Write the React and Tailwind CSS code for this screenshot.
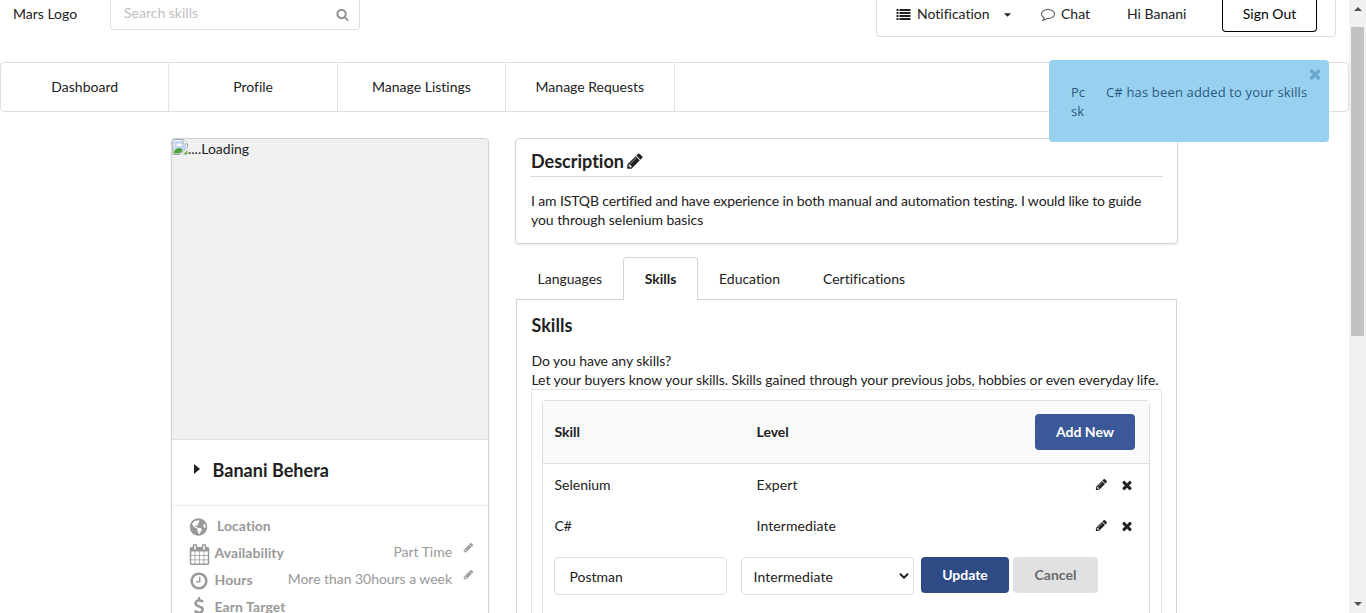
import React from "react";
import { FaGlobeAmericas } from "react-icons/fa";

const paths = {
  search:
    "M1216 832q0-185-131.5-316.5t-316.5-131.5-316.5 131.5-131.5 316.5 131.5 316.5 316.5 131.5 316.5-131.5 131.5-316.5zm512 832q0 52-38 90t-90 38q-54 0-90-38l-343-342q-179 124-399 124-143 0-273.5-55.5t-225-150-150-225-55.5-273.5 55.5-273.5 150-225 225-150 273.5-55.5 273.5 55.5 225 150 150 225 55.5 273.5q0 220-124 399l343 343q37 37 37 90z",
  pencil:
    "M491 1536l91-91-235-235-91 91v107h128v128h107zm523-928q0-22-22-22-10 0-17 7l-542 542q-7 7-7 17 0 22 22 22 10 0 17-7l542-542q7-7 7-17zm-54-192l416 416-832 832h-416v-416zm683 96q0 53-37 90l-166 166-416-416 166-165q36-38 90-38 53 0 91 38l235 234q37 39 37 91z",
  times:
    "M1490 1322q0 40-28 68l-136 136q-28 28-68 28t-68-28l-294-294-294 294q-28 28-68 28t-68-28l-136-136q-28-28-28-68t28-68l294-294-294-294q-28-28-28-68t28-68l136-136q28-28 68-28t68 28l294 294 294-294q28-28 68-28t68 28l136 136q28 28 28 68t-28 68l-294 294 294 294q28 28 28 68z",
  list: "M0 256h256v256H0zM384 256h1408v256H384zM0 640h256v256H0zM384 640h1408v256H384zM0 1024h256v256H0zM384 1024h1408v256H384zM0 1408h256v256H0zM384 1408h1408v256H384z",
  clock:
    "M1024 544v448q0 14-9 23t-23 9h-320q-14 0-23-9t-9-23v-64q0-14 9-23t23-9h224v-352q0-14 9-23t23-9h64q14 0 23 9t9 23zm416 352q0-148-73-273t-198-198-273-73-273 73-198 198-73 273 73 273 198 198 273 73 273-73 198-198 73-273zm224 0q0 209-103 385.5t-279.5 279.5-385.5 103-385.5-103-279.5-279.5-103-385.5 103-385.5 279.5-279.5 385.5-103 385.5 103 279.5 279.5 103 385.5z",
  calendar:
    "M192 1664h288v-288h-288v288zm352 0h320v-288h-320v288zm-352-352h288v-320h-288v320zm352 0h320v-320h-320v320zm-352-384h288v-288h-288v288zm736 736h320v-288h-320v288zm-384-736h320v-288h-320v288zm768 736h288v-288h-288v288zm-384-352h320v-320h-320v320zm-352-864v-288q0-13-9.5-22.5t-22.5-9.5h-64q-13 0-22.5 9.5t-9.5 22.5v288q0 13 9.5 22.5t22.5 9.5h64q13 0 22.5-9.5t9.5-22.5zm736 864h288v-320h-288v320zm-384-384h320v-288h-320v288zm384 0h288v-288h-288v288zm32-480v-288q0-13-9.5-22.5t-22.5-9.5h-64q-13 0-22.5 9.5t-9.5 22.5v288q0 13 9.5 22.5t22.5 9.5h64q13 0 22.5-9.5t9.5-22.5zm384-64v1280q0 52-38 90t-90 38h-1408q-52 0-90-38t-38-90v-1280q0-52 38-90t90-38h128v-96q0-66 47-113t113-47h64q66 0 113 47t47 113v96h384v-96q0-66 47-113t113-47h64q66 0 113 47t47 113v96h128q52 0 90 38t38 90z",
  comment:
    "M896 384q-204 0-381.5 69.5t-282 187.5-104.5 255q0 112 71.5 213.5t201.5 175.5l87 50-27 96q-24 91-70 172 152-63 275-171l43-38 57 6q69 8 130 8 204 0 381.5-69.5t282-187.5 104.5-255-104.5-255-282-187.5-381.5-69.5zm896 512q0 174-120 321.5t-326 233-450 85.5q-70 0-145-8-198 175-460 242-49 14-114 22h-5q-15 0-27-10.5t-16-27.5v-1q-3-4-.5-12t2-10 4.5-9.5l6-9 7-8.5 8-9q7-8 31-34.5t34.5-38 31-39.5 32.5-51 27-59 26-76q-157-89-247.5-220t-90.5-281q0-174 120-321.5t326-233 450-85.5 450 85.5 326 233 120 321.5z",
  dollar:
    "M1362 1185q0 153-99.5 263.5t-258.5 136.5v175q0 14-9 23t-23 9h-135q-13 0-22.5-9.5t-9.5-22.5v-175q-66-9-127.5-31t-101.5-44.5-74-48-46.5-37.5-17.5-18q-17-21-2-41l103-135q7-10 23-12 15-2 24 9l2 2q113 99 243 125 37 8 74 8 81 0 142.5-43t61.5-122q0-28-15-53t-33.5-42-58.5-37.5-66-32-80-32.5q-39-16-61.5-25t-61.5-26.5-62.5-31-56.5-35.5-53.5-42.5-43.5-49-35.5-58-21-66.5-8.5-78q0-138 98-242t255-134v-180q0-13 9.5-22.5t22.5-9.5h135q14 0 23 9t9 23v176q57 6 110.5 23t87 33.5 63.5 37.5 39 29 15 14q17 18 5 38l-81 146q-8 15-23 16-14 3-27-7-3-3-14.5-12t-39-26.5-58.5-32-74.5-26-85.5-11.5q-95 0-155 43t-60 111q0 26 8.5 48t29.5 41.5 39.5 33 56 31 60.5 27 70 27.5q53 20 81 31.5t76 35 75.5 42.5 62 50 53 63.5 31.5 76.5 13 94z",
};

function Icon({ name, className }) {
  return (
    <svg viewBox="0 0 1792 1792" fill="currentColor" className={`shrink-0 ${className}`} aria-hidden="true">
      <path d={paths[name]} />
    </svg>
  );
}

function BrokenImage() {
  return (
    <svg viewBox="0 0 16 16" className="h-4 w-4 shrink-0" aria-hidden="true">
      <path d="M1 .5h10l4.500 4.500v3L8 15.500H1z" fill="#fff" stroke="#9da1a5" />
      <path d="M2.500 2h8v4h3.500v2.500L8.500 14h-6z" fill="#c0d5f5" />
      <path d="M4 7q0-2 1.700-2 1.300-1.500 2.600 0Q10 5 10 7z" fill="#fff" />
      <path d="M2 14.500V12q3-4 6.500-2.800L11 11l-3.500 3.500z" fill="#4fa33c" />
      <path d="M11 .5V5h4.500" fill="#fff" stroke="#9da1a5" />
      <path d="M15.500 11v4.500H11z" fill="#6fb35f" />
    </svg>
  );
}

const navItems = ["Dashboard", "Profile", "Manage Listings", "Manage Requests"];

const skills = [
  { name: "Selenium", level: "Expert" },
  { name: "C#", level: "Intermediate" },
];

function TopBar() {
  return (
    <header className="flex h-[37px] items-start">
      <div className="w-[110px] pl-[13px] pt-1">Mars Logo</div>
      <div className="flex h-[30px] w-[250px] items-start justify-between rounded-b border border-t-0 border-[#dededf] pl-[13px] pr-[10px] pt-[3px]">
        <span className="text-[#c0c0c0]">Search skills</span>
        <Icon name="search" className="mt-[5px] h-[13px] w-[13px] text-[#8f8f8f]" />
      </div>
      <div className="ml-auto mr-[13px] flex h-[37px] w-[460px] rounded-b border border-t-0 border-[#dededf]">
        <div className="flex w-[149px] items-start pl-[19px] pt-1">
          <Icon name="list" className="mt-[3px] h-[14px] w-[15px]" />
          <span className="ml-[6px]">Notification</span>
          <svg viewBox="0 0 8 4" className="ml-auto mr-[15px] mt-[9px] h-1 w-[7px]" fill="currentColor">
            <path d="M0 0h8L4 4z" />
          </svg>
        </div>
        <div className="flex w-[101px] items-start pl-[15px] pt-1">
          <Icon name="comment" className="mt-[3px] h-[14px] w-[14px] text-[#555]" />
          <span className="ml-[6px]">Chat</span>
        </div>
        <div className="w-[95px] pt-1">Hi Banani</div>
        <div className="h-8 w-[95px] rounded-b border border-t-0 border-black pt-1 text-center text-black">Sign Out</div>
      </div>
    </header>
  );
}

function ProfileCard() {
  const rows = [
    { label: "Availability", icon: "calendar", value: "Part Time", size: "mt-[4px] h-[21px] w-[21px] -mr-px" },
    { label: "Hours", icon: "clock", value: "More than 30hours a week", size: "mt-[4px] h-5 w-5" },
    { label: "Earn Target", icon: "dollar", value: "", size: "mt-[3px] h-[19px] w-5" },
  ];
  return (
    <aside className="h-[520px] w-[318px] overflow-hidden rounded border border-[#d2d3d4] shadow-[0_1px_2px_rgba(34,36,38,0.12)]">
      <div className="flex h-[300px] items-start bg-[#f0f0f0]">
        <BrokenImage />
        <span>....Loading</span>
      </div>
      <div className="flex h-[67px] items-start border-y border-t-[#dfdfdf] border-b-[#ececec] pl-[22px] pt-[19px]">
        <svg viewBox="0 0 6 10" className="mt-[5px] h-[10px] w-[6px]" fill="currentColor">
          <path d="M0 0l6 5-6 5z" />
        </svg>
        <h2 className="ml-[12.500px] text-[18px] font-bold leading-[22px] tracking-[0.03px]">Banani Behera</h2>
      </div>
      <div className="pl-[17px] pr-[15px] pt-[7px] text-[#999]">
        <div className="flex h-[27px] items-start">
          <FaGlobeAmericas className="mt-[5px] h-[18px] w-[19px]" />
          <span className="ml-[9px] mt-[3px] font-bold tracking-[0.05px]">Location</span>
        </div>
        {rows.map((row) => (
          <div key={row.label} className="flex h-[27px] items-start">
            <Icon name={row.icon} className={row.size} />
            <span className="ml-[5.500px] mt-[3px] font-bold tracking-[0.07px]">{row.label}</span>
            {row.value && (
              <span className="-mr-px ml-auto flex items-start">
                <span className="mt-[2px] tracking-[-0.04px]">{row.value}</span>
                <Icon name="pencil" className="ml-[11px] mt-[2px] h-[11px] w-[11px]" />
              </span>
            )}
          </div>
        ))}
      </div>
    </aside>
  );
}

function SkillsTable() {
  return (
    <div className="h-[260px] w-[631px] border border-[#e4e4e5] p-[10px]">
      <div className="h-[250px] w-[608px] rounded-t border border-[#dededf]">
        <div className="flex h-[63px] items-center border-b border-[#dededf] bg-[#f9fafb] pl-[11.500px] pr-[14px] font-bold">
          <span className="w-[202px]">Skill</span>
          <span>Level</span>
          <button className="ml-auto h-9 w-[100px] rounded bg-[#3b5998] font-bold text-white">Add New</button>
        </div>
        {skills.map((skill) => (
          <div key={skill.name} className="flex h-[41px] items-center pl-[11.500px] pr-[15px]">
            <span className="w-[202px]">{skill.name}</span>
            <span className="tracking-[0.1px]">{skill.level}</span>
            <Icon name="pencil" className="ml-auto h-[13px] w-[13px]" />
            <Icon name="times" className="ml-[12px] h-[14px] w-[14px]" />
          </div>
        ))}
        <div className="flex items-start pl-[11px] pt-[11px]">
          <div className="flex h-[38px] w-[173px] items-center rounded border border-[#dededf] pl-[14.500px] pt-[2px]">Postman</div>
          <div className="ml-[14px] flex h-[38px] w-[173px] items-center rounded border border-[#dededf] pl-[11.500px] pr-1 pt-[2px]">
            <span className="tracking-[0.1px]">Intermediate</span>
            <svg viewBox="0 0 10 6" className="-mt-[2px] ml-auto h-[6px] w-[10px]" fill="none" stroke="currentColor" strokeWidth="2">
              <path d="M1 .7l4 4 4-4" />
            </svg>
          </div>
          <button className="ml-[7px] h-9 w-[88px] rounded bg-[#2f4b86] font-bold text-white">Update</button>
          <button className="ml-1 h-9 w-[85px] rounded bg-[#e0e1e2] font-bold text-[#696969]">Cancel</button>
        </div>
      </div>
    </div>
  );
}

function Toast() {
  return (
    <div className="absolute left-[1049px] top-[60px] flex h-[82px] w-[280px] items-start rounded bg-[#98d1f0] pl-[22px] pt-[23px] font-['Open_Sans',sans-serif] text-[13px] leading-[19px] text-[#2c587f]">
      <div className="w-[35px]">
        Pc
        <br />
        sk
      </div>
      <div className="whitespace-nowrap tracking-[0.16px]">C# has been added to your skills</div>
      <Icon name="times" className="absolute right-[6px] top-[6px] h-[16px] w-[16px] text-[#6aa8cc]" />
    </div>
  );
}

function Scrollbar() {
  return (
    <div className="flex h-full w-[17px] flex-col items-center bg-[#f1f1f1]">
      <svg viewBox="0 0 8 4" className="mt-[7px] h-1 w-2 shrink-0" fill="#505050">
        <path d="M4 0l4 4H0z" />
      </svg>
      <div className="mt-4 h-[309px] w-[13px] bg-[#c1c1c1]" />
      <svg viewBox="0 0 8 4" className="mb-[7px] mt-auto h-1 w-2 shrink-0" fill="#505050">
        <path d="M0 0h8L4 4z" />
      </svg>
    </div>
  );
}

export default function App() {
  return (
    <div className="relative flex h-[613px] w-[1366px] overflow-hidden bg-white font-[Lato,sans-serif] text-[14px] leading-[20px] text-[#212121] [font-variant-ligatures:no-common-ligatures]">
      <div className="h-full w-[1349px] overflow-hidden">
        <TopBar />
        <nav className="mt-[25px] flex h-[50px] rounded border border-[#dededf]">
          {navItems.map((item) => (
            <div key={item} className="flex w-[168.4px] items-center justify-center border-r border-[#e4e4e5]">
              {item}
            </div>
          ))}
        </nav>
        <main className="flex items-start pl-[171px] pt-[26px]">
          <ProfileCard />
          <div className="ml-[26px] w-[663px]">
            <section className="h-[106px] rounded border border-[#d2d3d4] px-[14px] shadow-[0_1px_2px_rgba(34,36,38,0.12)]">
              <h2 className="flex h-[38px] items-center border-b border-[#d9d9da] pt-[7px] text-[18px] font-bold">
                <span className="pl-px">Description</span>
                <Icon name="pencil" className="ml-[2px] h-[18px] w-[18px]" />
              </h2>
              <p className="whitespace-nowrap pl-px pt-[14px] leading-[19px]">
                <span className="tracking-[-0.13px]">
                  I am ISTQB certified and have experience in both manual and automation testing. I would like to guide
                </span>
                <br />
                <span className="tracking-[-0.05px]">you through selenium basics</span>
              </p>
            </section>
            <div className="ml-px mt-[13px] flex h-[43px]">
              <div className="w-[107px] border-b border-[#d4d4d5] pl-[21.500px] pt-3">Languages</div>
              <div className="w-[75px] rounded-t border border-b-0 border-[#d4d4d5] pt-[11px] text-center font-bold">Skills</div>
              <div className="flex-1 border-b border-[#d4d4d5] pl-[21px] pt-3">
                <span className="inline-block w-[104px]">Education</span>
                <span>Certifications</span>
              </div>
              <div className="w-px" />
            </div>
            <section className="ml-px w-[661px] border-x border-[#d4d4d5] pl-[14px] pt-[14px]">
              <h3 className="pl-[0.5px] text-[18px] font-bold leading-[23px]">Skills</h3>
              <p className="mt-[14px] whitespace-nowrap pl-[0.5px] leading-[19px] tracking-[-0.06px]">
                Do you have any skills?
                <br />
                Let your buyers know your skills. Skills gained through your previous jobs, hobbies or even everyday life.
              </p>
              <SkillsTable />
            </section>
          </div>
        </main>
      </div>
      <Scrollbar />
      <Toast />
    </div>
  );
}
